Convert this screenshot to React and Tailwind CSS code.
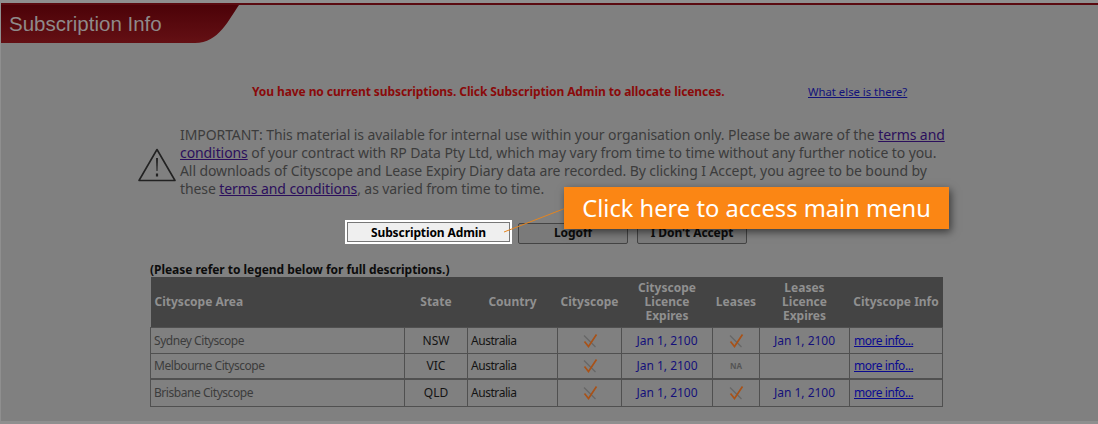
const rows = [
  { area: 'Sydney Cityscope', state: 'NSW', leases: true, h: 'h-[26px]', border: '' },
  { area: 'Melbourne Cityscope', state: 'VIC', leases: false, h: 'h-[26px]', border: 'border-b-2' },
  { area: 'Brisbane Cityscope', state: 'QLD', leases: true, h: 'h-[27px]', border: '' },
];

const Check = () => (
  <svg width="16" height="16" viewBox="0 0 16 16" className="mx-auto block">
    <path d="M2 2.5 L13.5 14" stroke="#666666" strokeWidth="1.2" fill="none" />
    <path d="M2.5 8.5 L6.5 13.5 L14.5 1.5" stroke="#a85218" strokeWidth="1.7" fill="none" />
  </svg>
);

const Cell = ({ children, className = '' }) => (
  <td className={`border border-[#505050] px-[3px] pt-px pb-0 ${className}`}>{children}</td>
);

const App = () => {
  return (
    <div className="relative w-[1098px] h-[424px] overflow-hidden bg-[#8f8f8f] pl-px pt-[3px] pb-[3px] font-['Noto_Sans',sans-serif] text-[12px]">
      <div className="h-[418px] bg-[#808080] border-t-2 border-[#5a0a10]">
        {/* title tab */}
        <div className="relative w-[239px] h-[38px]">
          <svg width="239" height="38" viewBox="0 0 239 38" className="absolute inset-0">
            <defs>
              <linearGradient id="tab" x1="0" y1="0" x2="0" y2="1">
                <stop offset="0" stopColor="#4c0208" />
                <stop offset="1" stopColor="#641014" />
              </linearGradient>
            </defs>
            <path d="M0 0 H238 C228 14 218 38 194 38 H0 Z" fill="url(#tab)" />
          </svg>
          <span className="relative block pl-[8px] pt-[4px] font-['Liberation_Sans',sans-serif] text-[20.5px] leading-[29px] text-[#8f8a8a]">Subscription Info</span>
        </div>

        {/* message */}
        <div className="flex mt-[41px] h-[16px]">
          <p className="ml-[251px] w-[556px] text-[12px] tracking-[-0.09px] leading-[16px] font-bold text-[#8a0a0a]">You have no current subscriptions. Click Subscription Admin to allocate licences.</p>
          <a className="text-[11.3px] leading-[16px] text-[#12127a] underline">What else is there?</a>
        </div>

        {/* notice */}
        <div className="flex items-center mt-[26px] ml-[137px]">
          <svg width="38" height="34" viewBox="0 0 38 34" className="mt-[5px]">
            <path d="M19 1.5 L37 32.5 H1 Z" fill="none" stroke="#222" strokeWidth="1.6" strokeLinejoin="round" />
            <path d="M18 10 H20 L19.5 23 H18.5 Z" fill="#222" />
            <path d="M19 25.5 V28.5" stroke="#222" strokeWidth="2.2" />
          </svg>
          <p className="ml-[4px] w-[775px] text-[14px] tracking-[-0.085px] leading-[18px] text-[#3c3c3c]">
            IMPORTANT: This material is available for internal use within your organisation only. Please be aware of the <a className="underline text-[#2b0f5c]">terms and</a><br />
            <a className="underline text-[#2b0f5c]">conditions</a> of your contract with RP Data Pty Ltd, which may vary from time to time without any further notice to you.<br />
            All downloads of Cityscope and Lease Expiry Diary data are recorded. By clicking I Accept, you agree to be bound by<br />
            these <a className="underline text-[#2b0f5c]">terms and conditions</a>, as varied from time to time.
          </p>
        </div>

        {/* buttons */}
        <div className="flex items-center mt-[22px] ml-[344px] text-[12px] tracking-[-0.1px] font-bold text-[#0c0c0c]">
          <button className="w-[167px] h-[24px] pt-[2px] border-2 border-white bg-[#efefef] outline outline-1 -outline-offset-3 outline-[#777] text-black">Subscription Admin</button>
          <button className="ml-[6px] w-[110px] h-[21px] rounded-[2px] border border-[#444] bg-[#7a7a7a] translate-y-px">Logoff</button>
          <button className="ml-[9px] w-[110px] h-[21px] rounded-[2px] border border-[#444] bg-[#7a7a7a] translate-y-px">I Don't Accept</button>
        </div>

        {/* table */}
        <p className="mt-[19px] ml-[149px] text-[12px] tracking-[-0.04px] leading-[14px] font-bold text-[#0c0c0c]">(Please refer to legend below for full descriptions.)</p>
        <table className="ml-[149px] w-[792px] table-fixed border-collapse text-[12px] tracking-[-0.45px] text-[#141414]">
          <colgroup>
            <col className="w-[254px]" />
            <col className="w-[63px]" />
            <col className="w-[90px]" />
            <col className="w-[64px]" />
            <col className="w-[91px]" />
            <col className="w-[47px]" />
            <col className="w-[90px]" />
            <col className="w-[93px]" />
          </colgroup>
          <thead>
            <tr className="h-[50px] bg-[#444444] text-[#909090] font-bold tracking-normal leading-[14px]">
              <th className="px-[4px] text-left">Cityscope Area</th>
              <th>State</th>
              <th>Country</th>
              <th>Cityscope</th>
              <th>Cityscope<br />Licence<br />Expires</th>
              <th>Leases</th>
              <th>Leases<br />Licence<br />Expires</th>
              <th className="whitespace-nowrap">Cityscope Info</th>
            </tr>
          </thead>
          <tbody>
            {rows.map((r) => (
              <tr key={r.area} className={`${r.h} ${r.border} border-[#505050]`}>
                <Cell className="text-[#3c3c3c]">{r.area}</Cell>
                <Cell className="text-center tracking-normal">{r.state}</Cell>
                <Cell>Australia</Cell>
                <Cell><Check /></Cell>
                <Cell className="text-center tracking-normal text-[#14107a]">Jan 1, 2100</Cell>
                <Cell>{r.leases ? <Check /> : <span className="block text-center text-[8px] tracking-normal font-bold text-[#555]">NA</span>}</Cell>
                <Cell className="text-center tracking-normal text-[#14107a]">{r.leases ? 'Jan 1, 2100' : ''}</Cell>
                <Cell className="pl-[4px]"><a className="underline text-[#0a0a90]">more info...</a></Cell>
              </tr>
            ))}
          </tbody>
        </table>
      </div>

      {/* callout */}
      <svg width="70" height="40" viewBox="0 0 70 40" className="absolute left-[500px] top-[200px]">
        <path d="M4 32 L66 8" stroke="#e5851f" strokeWidth="1" fill="none" />
      </svg>
      <div className="absolute left-[564px] top-[187px] w-[385px] h-[42px] bg-[#fb8614] shadow-[2px_3px_8px_rgba(0,0,0,0.55)] text-center text-[23.7px] leading-[42px] text-white">Click here to access main menu</div>
    </div>
  );
};

export default App;
